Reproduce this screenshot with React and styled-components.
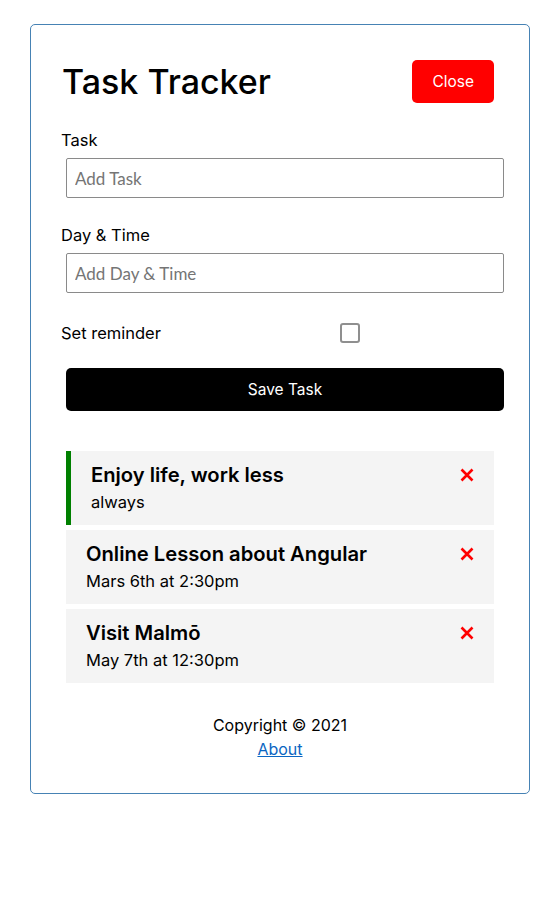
import React, { useState } from 'react'
import styled, { createGlobalStyle } from 'styled-components'

const GlobalStyle = createGlobalStyle`
  * { box-sizing: border-box; margin: 0; padding: 0; }
  body { font-family: Inter, "Open Sans", sans-serif; background: #fff; color: #000; }
`

const initialTasks = [
  { id: 1, text: 'Enjoy life, work less', day: 'always', reminder: true },
  { id: 2, text: 'Online Lesson about Angular', day: 'Mars 6th at 2:30pm', reminder: false },
  { id: 3, text: 'Visit Malmō', day: 'May 7th at 12:30pm', reminder: false },
]

const CloseIcon = ({ onClick }) => (
  <DeleteIcon width="14" height="14" viewBox="0 0 14 14" onClick={onClick}>
    <path d="M1.5 1.5 L12.5 12.5 M12.5 1.5 L1.5 12.5" stroke="#f00" strokeWidth="2.6" />
  </DeleteIcon>
)

function App() {
  const [tasks, setTasks] = useState(initialTasks)
  const [reminder, setReminder] = useState(false)

  const deleteTask = (id) => {
    setTasks(tasks.filter((t) => t.id !== id))
  }

  return (
    <>
      <GlobalStyle />
      <Container>
        <Header>
          <Title>Task Tracker</Title>
          <Button bg="red">Close</Button>
        </Header>
        <Form onSubmit={(e) => e.preventDefault()}>
          <FormControl>
            <Label>Task</Label>
            <Input type="text" placeholder="Add Task" />
          </FormControl>
          <FormControl>
            <Label>Day &amp; Time</Label>
            <Input type="text" placeholder="Add Day & Time" />
          </FormControl>
          <CheckControl>
            <CheckLabel>Set reminder</CheckLabel>
            <CheckWrap>
              <Check type="checkbox" checked={reminder} onChange={(e) => setReminder(e.target.checked)} />
            </CheckWrap>
          </CheckControl>
          <BlockButton type="submit">Save Task</BlockButton>
        </Form>
        <TaskList>
          {tasks.map((t) => (
            <Task key={t.id} reminder={t.reminder ? 1 : 0}>
              <TaskTitle>
                {t.text}
                <CloseIcon onClick={() => deleteTask(t.id)} />
              </TaskTitle>
              <TaskDay>{t.day}</TaskDay>
            </Task>
          ))}
        </TaskList>
        <Footer>
          <FooterText>Copyright © 2021</FooterText>
          <AboutLink href="#about">About</AboutLink>
        </Footer>
      </Container>
    </>
  )
}

export default App

const Container = styled.div`
  width: 500px;
  margin: 24px 0 0 30px;
  border: 1px solid steelblue;
  border-radius: 5px;
  padding: 30px 30px 32px;
`

const Header = styled.header`
  display: flex;
  justify-content: space-between;
  align-items: center;
  margin-bottom: 20px;
`

const Title = styled.h1`
  font-size: 34px;
  font-weight: 500;
  line-height: 40px;
  padding-left: 1px;
`

const Button = styled.button`
  display: inline-block;
  background: ${(p) => p.bg || '#000'};
  color: #fff;
  border: none;
  height: 43px;
  padding: 0 20px;
  margin: 5px;
  border-radius: 5px;
  font-size: 15.5px;
  font-family: inherit;
  cursor: pointer;
`

const BlockButton = styled(Button)`
  display: block;
  width: 100%;
  margin: 0 5px;
`

const Form = styled.form`
  margin-bottom: 40px;
`

const FormControl = styled.div`
  display: flow-root;
  margin: 0 0 20px;
`

const Label = styled.label`
  display: block;
  font-size: 16.5px;
  line-height: 25px;
`

const Input = styled.input`
  display: block;
  width: 100%;
  height: 40px;
  margin: 5px;
  padding: 3px 8px;
  font-size: 17px;
  font-family: Lato, sans-serif;
  border: 1px solid #8a8a8a;
  border-radius: 2px;
  &::placeholder { color: #757575; }
`

const CheckControl = styled.div`
  display: flex;
  align-items: center;
  height: 30px;
  margin-bottom: 20px;
`

const CheckLabel = styled.label`
  flex: 1;
  font-size: 16.5px;
  line-height: 25px;
`

const CheckWrap = styled.div`
  flex: 2;
  display: flex;
  justify-content: center;
  padding-right: 5px;
`

const Check = styled.input`
  appearance: none;
  width: 20px;
  height: 20px;
  border: 2px solid #8f8f8f;
  border-radius: 3px;
  background: #fff;
  cursor: pointer;
  &:checked { background: #0075ff; border-color: #0075ff; }
`

const TaskList = styled.div`
  display: flex;
  flex-direction: column;
  gap: 5px;
`

const Task = styled.div`
  background: #f4f4f4;
  margin: 0 5px;
  height: 74px;
  padding: 10px 20px;
  border-left: ${(p) => (p.reminder ? '5px solid green' : 'none')};
  cursor: pointer;
`

const TaskTitle = styled.h3`
  display: flex;
  align-items: center;
  justify-content: space-between;
  font-size: 20.2px;
  font-weight: 600;
  line-height: 28px;
`

const DeleteIcon = styled.svg`
  flex-shrink: 0;
  cursor: pointer;
`

const TaskDay = styled.p`
  font-size: 16.5px;
  line-height: 26px;
`

const Footer = styled.footer`
  margin-top: 30px;
  text-align: center;
`

const FooterText = styled.p`
  font-size: 16px;
  line-height: 24px;
`

const AboutLink = styled.a`
  font-size: 16px;
  line-height: 24px;
  color: #0b66c2;
`
